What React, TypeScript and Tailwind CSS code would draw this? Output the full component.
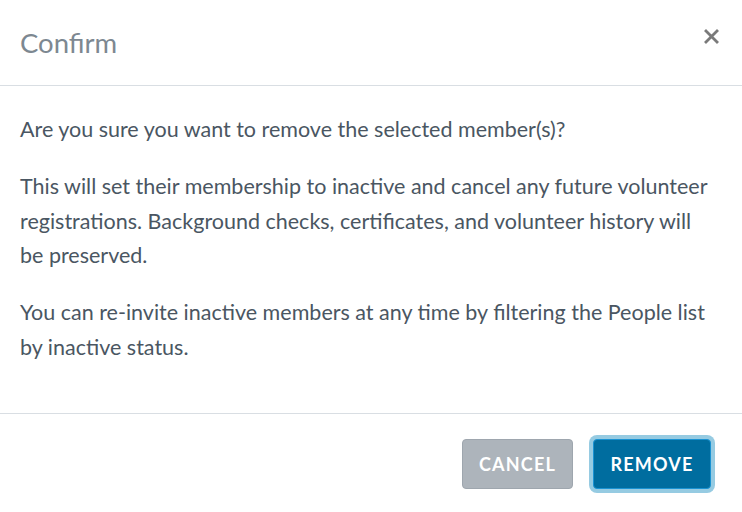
export default function App() {
  return (
    <div className="w-[742px] h-[512px] bg-white font-['Lato',sans-serif] flex flex-col">
      <div className="h-[86px] flex items-center justify-between pl-5 pr-[23px] border-b border-[#d9dee3]">
        <h1 className="text-[27.5px] text-[#7d8891] leading-none">Confirm</h1>
        <button className="text-[#7a7a7a] -mt-[13px]" aria-label="Close">
          <svg width="15" height="15" viewBox="0 0 15 15">
            <path d="M2 2L13 13M13 2L2 13" stroke="currentColor" strokeWidth="2.8" strokeLinecap="square" />
          </svg>
        </button>
      </div>
      <div className="h-[328px] pl-5 pr-[30px] pt-[26px] text-[21.5px] leading-[34.5px] text-[#4a5662] flex flex-col gap-[22.5px] border-b border-[#d9dee3]">
        <p>Are you sure you want to remove the selected member(s)?</p>
        <p>
          This will set their membership to inactive and cancel any future volunteer registrations. Background checks,
          certificates, and volunteer history will be preserved.
        </p>
        <p>You can re-invite inactive members at any time by filtering the People list by inactive status.</p>
      </div>
      <div className="flex justify-end items-start gap-5 pt-[25px] pr-[31px]">
        <button className="h-[50px] w-[111px] rounded-[4px] bg-[#adb4bb] border border-[#9ea6ae] text-white font-bold text-[18px] tracking-[1.2px]">
          CANCEL
        </button>
        <button className="h-[50px] w-[118px] rounded-[4px] bg-[#006d9f] border border-[#1a93d3] ring-4 ring-[#96cbe2] text-white font-bold text-[18px] tracking-[1.2px]">
          REMOVE
        </button>
      </div>
    </div>
  );
}
